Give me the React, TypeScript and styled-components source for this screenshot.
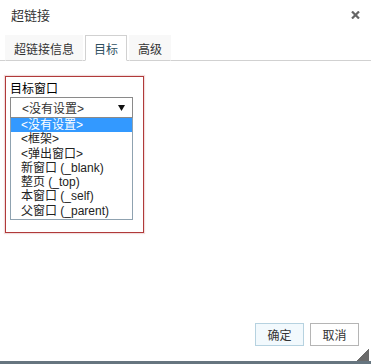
import React from "react";
import styled, { createGlobalStyle } from "styled-components";

const Global = createGlobalStyle`
  html, body { margin: 0; padding: 0; background: #fff; }
  body { font-family: "Liberation Sans", "Noto Sans CJK SC", sans-serif; }
  * { box-sizing: border-box; }
`;

const Dialog = styled.div`
  width: 371px;
  height: 364px;
  display: flex;
  flex-direction: column;
  background: #fff;
  position: relative;
  overflow: hidden;
`;

const Header = styled.div`
  height: 30px;
  display: flex;
  align-items: center;
  justify-content: space-between;
  padding: 0 11px 0 11px;
`;

const Title = styled.div`
  font-size: 13px;
  color: #333;
  line-height: 14px;
  padding-top: 1px;
`;

const Close = styled.button`
  border: 0;
  background: none;
  padding: 0;
  width: 10px;
  height: 10px;
  display: flex;
  align-items: center;
  justify-content: center;
  cursor: pointer;
`;

const TabBar = styled.div`
  height: 31px;
  display: flex;
  align-items: flex-end;
  gap: 2px;
  padding-left: 5px;
  border-bottom: 1px solid #d1d1d1;
`;

const Tab = styled.div<{ $active?: boolean }>`
  height: 26px;
  margin-bottom: -1px;
  padding: 0 8px;
  display: flex;
  align-items: center;
  font-size: 12px;
  color: ${(p) => (p.$active ? "#2f4f5f" : "#333")};
  background: ${(p) => (p.$active ? "#fff" : "#f8f8f8")};
  border: 1px solid ${(p) => (p.$active ? "#d1d1d1" : "#f8f8f8")};
  border-bottom-color: ${(p) => (p.$active ? "#fff" : "#d1d1d1")};
`;

const Content = styled.div`
  flex: 1;
  padding: 15px 0 0 5px;
`;

const Fieldset = styled.div`
  width: 139px;
  height: 157px;
  border: 1px solid #b03a3a;
  box-shadow: 0 0 1px 1px #f3dede;
  padding: 5px 0 0 4px;
`;

const Label = styled.div`
  font-size: 12px;
  line-height: 14px;
  color: #000;
  height: 15px;
`;

const SelectBox = styled.div`
  width: 123px;
  height: 21px;
  border: 1px solid #8a8a8a;
  display: flex;
  align-items: center;
  justify-content: space-between;
  padding: 0 7px 0 11px;
  font-size: 12px;
  color: #333;
`;

const List = styled.div`
  width: 123px;
  border: 1px solid #8fa2b0;
  border-top: 0;
  padding: 0 0 1px 0;
`;

const Option = styled.div<{ $selected?: boolean }>`
  height: 14.3px;
  line-height: 14px;
  padding-left: 10px;
  font-size: 12px;
  white-space: nowrap;
  color: ${(p) => (p.$selected ? "#fff" : "#222")};
  background: ${(p) => (p.$selected ? "#3399ff" : "transparent")};
`;

const Footer = styled.div`
  display: flex;
  justify-content: flex-end;
  gap: 6px;
  padding: 0 12px 15px 0;
`;

const Button = styled.button<{ $primary?: boolean }>`
  width: 49px;
  height: 23px;
  font-family: "Liberation Sans", "Noto Sans CJK SC", sans-serif;
  font-size: 12px;
  color: #333;
  background: ${(p) => (p.$primary ? "#f2f9fd" : "#fff")};
  border: 1px solid ${(p) => (p.$primary ? "#b6d2e0" : "#b5b5b5")};
  padding: 0;
  cursor: pointer;
`;

const BottomBar = styled.div`
  height: 3px;
  background: #66757f;
`;

const Grip = styled.div`
  position: absolute;
  right: 2px;
  bottom: 3px;
  width: 13px;
  height: 13px;
  background: linear-gradient(135deg, transparent 50%, #6b6b6b 50%);
`;

const options = [
  "<没有设置>",
  "<框架>",
  "<弹出窗口>",
  "新窗口 (_blank)",
  "整页 (_top)",
  "本窗口 (_self)",
  "父窗口 (_parent)",
];

export default function App() {
  return (
    <>
      <Global />
      <Dialog>
        <Header>
          <Title>超链接</Title>
          <Close aria-label="close">
            <svg width="9" height="8" viewBox="0 0 9 8">
              <path d="M1 0.5 L8 7.5 M8 0.5 L1 7.5" stroke="#666" strokeWidth="2.2" />
            </svg>
          </Close>
        </Header>
        <TabBar>
          <Tab>超链接信息</Tab>
          <Tab $active>目标</Tab>
          <Tab>高级</Tab>
        </TabBar>
        <Content>
          <Fieldset>
            <Label>目标窗口</Label>
            <SelectBox>
              <span>&lt;没有设置&gt;</span>
              <svg width="7" height="6" viewBox="0 0 7 6">
                <path d="M0 0 H7 L3.5 6 Z" fill="#111" />
              </svg>
            </SelectBox>
            <List>
              {options.map((o, i) => (
                <Option key={o} $selected={i === 0}>
                  {o}
                </Option>
              ))}
            </List>
          </Fieldset>
        </Content>
        <Footer>
          <Button $primary>确定</Button>
          <Button>取消</Button>
        </Footer>
        <BottomBar />
        <Grip />
      </Dialog>
    </>
  );
}
